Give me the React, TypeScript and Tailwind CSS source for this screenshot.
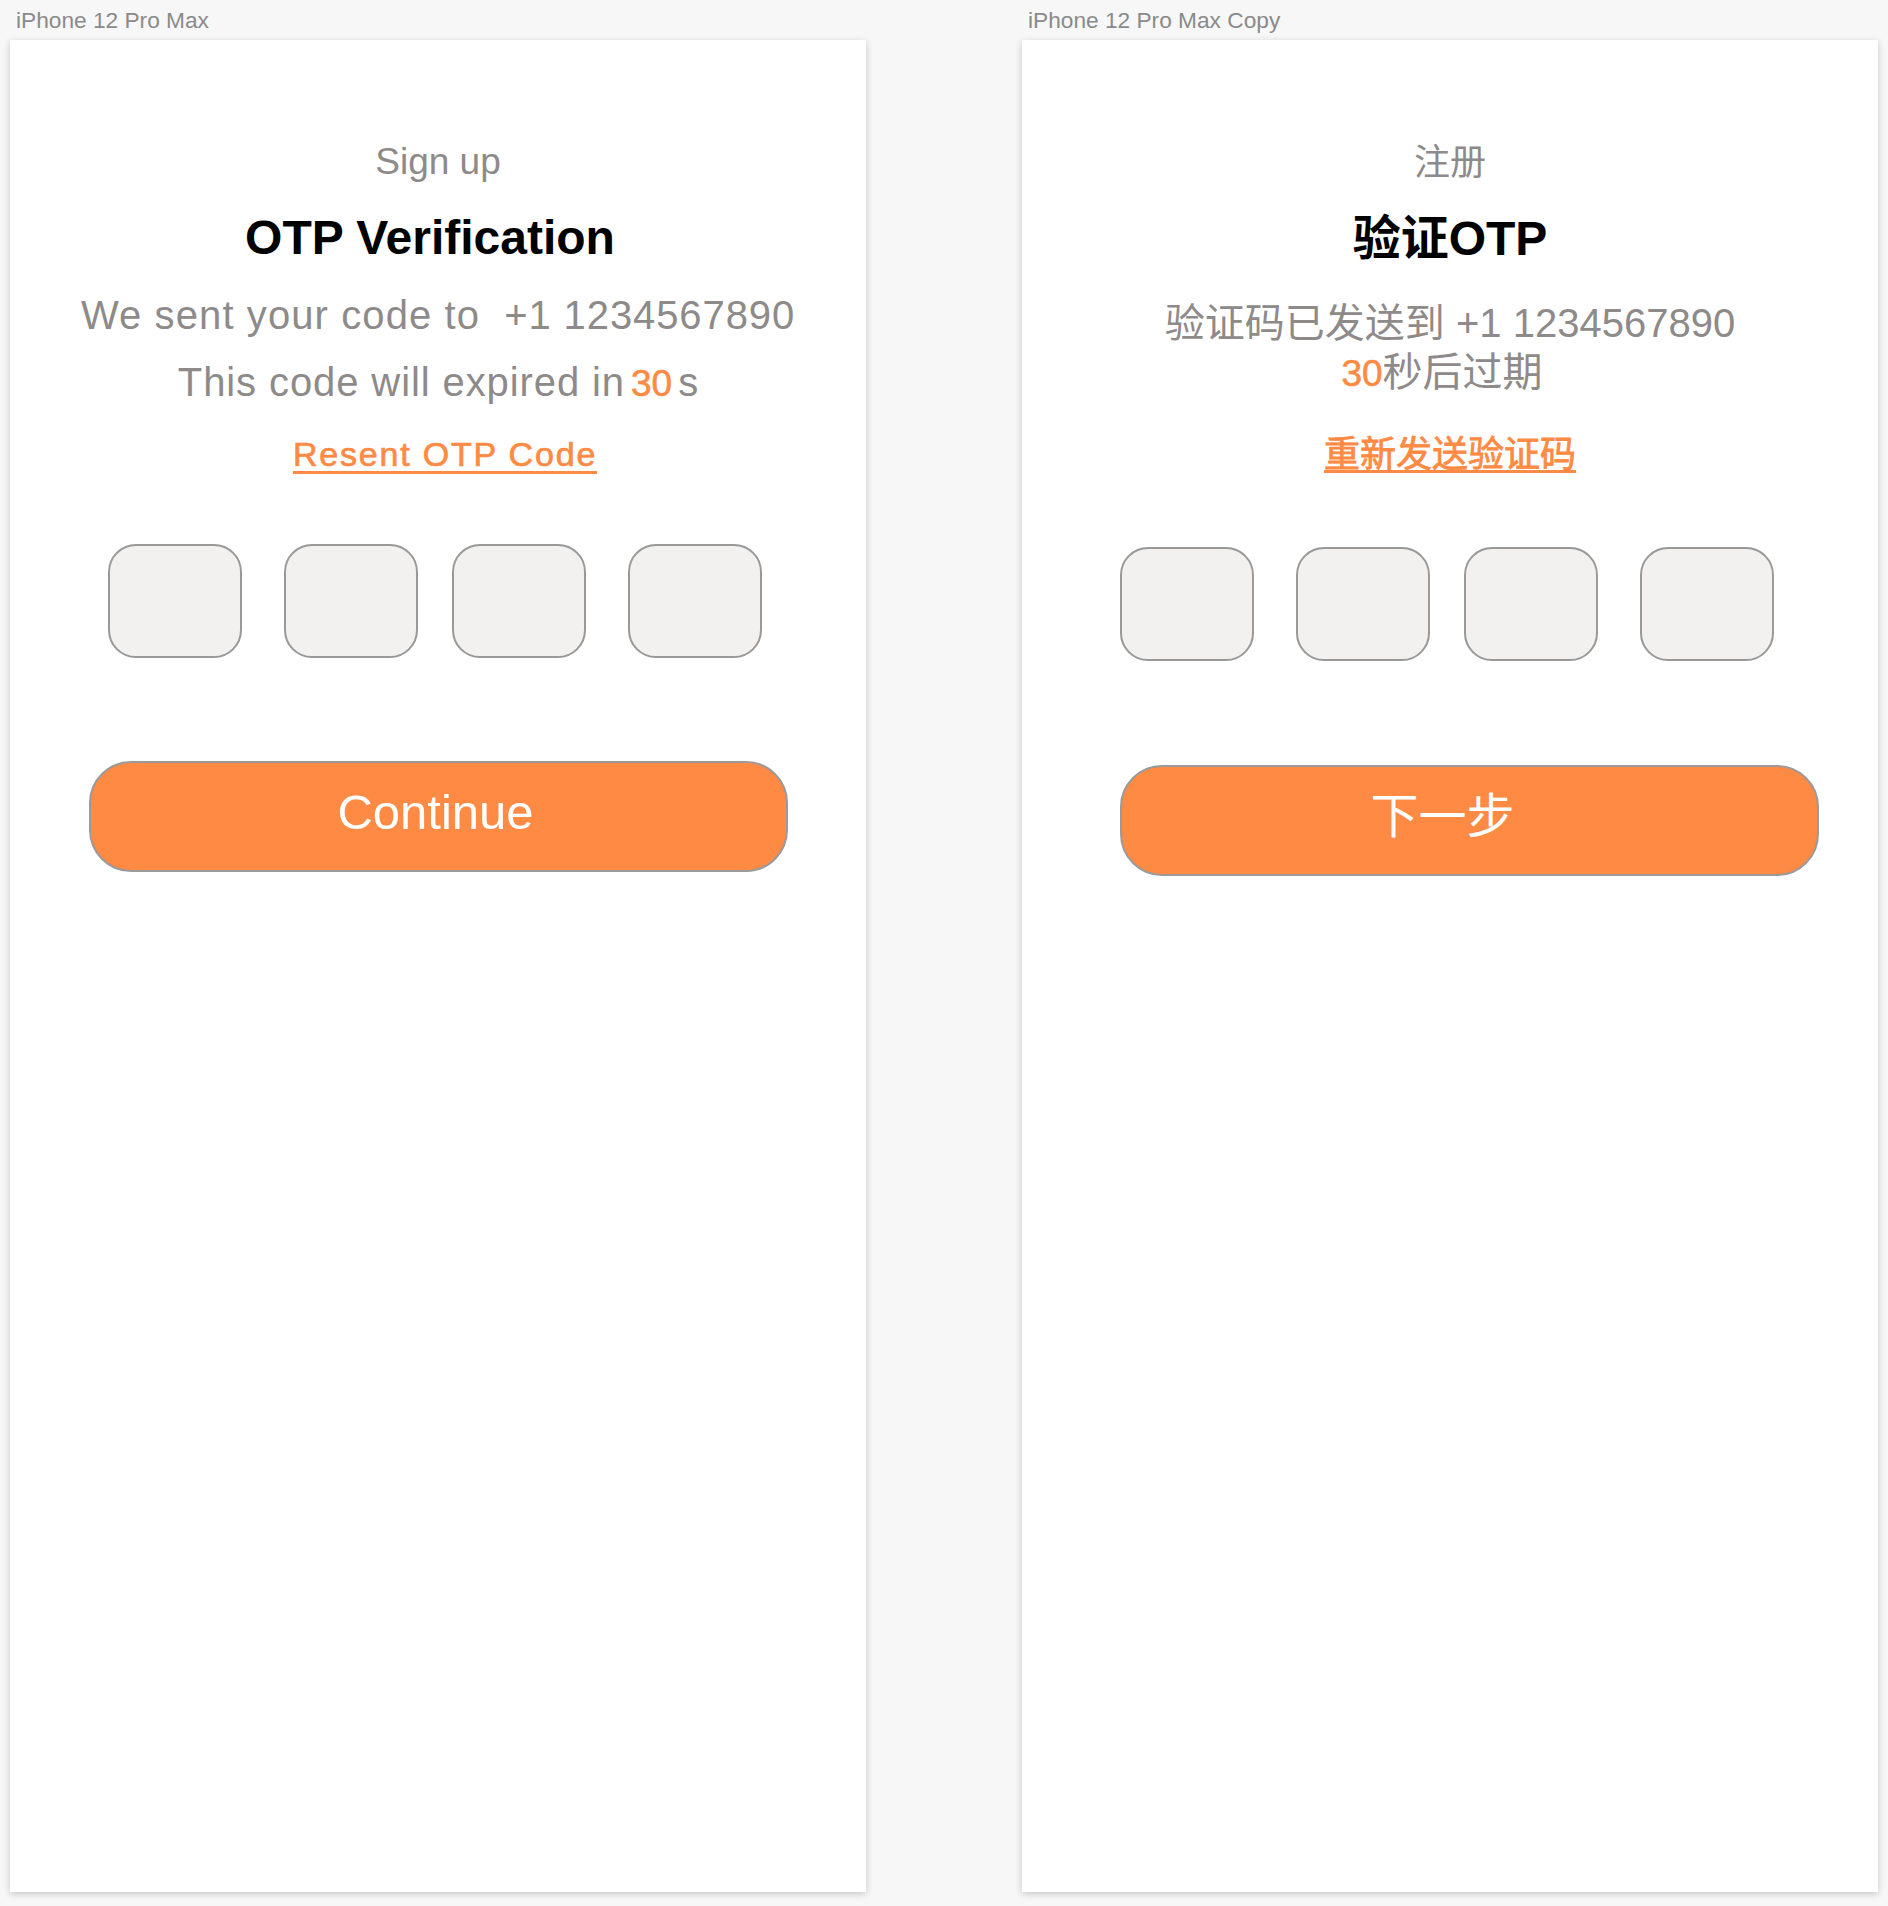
import type { ReactNode } from "react"

function Artboard({ label, children }: { label: string; children: ReactNode }) {
  return (
    <div className="flex flex-col">
      <div className="h-[40px] pl-[6px] pt-[9px] text-[22.7px] leading-[22px] text-[#8a8a8a]">{label}</div>
      <div className="flex h-[1852px] w-[856px] flex-col items-center bg-white shadow-[0_2px_7px_rgba(0,0,0,0.2)]">
        {children}
      </div>
    </div>
  )
}

function CodeBoxes({ className }: { className: string }) {
  const box = "h-[114px] w-[134px] rounded-[28px] border-2 border-[#999999] bg-[#f2f1f0]"
  return (
    <div className={`flex self-start pl-[98px] ${className}`}>
      <div className={box} />
      <div className={`${box} ml-[42px]`} />
      <div className={`${box} ml-[34px]`} />
      <div className={`${box} ml-[42px]`} />
    </div>
  )
}

export default function App() {
  return (
    <div className="flex min-h-[1906px] w-[1888px] gap-[156px] bg-[#f7f7f7] pl-[10px] font-['Liberation_Sans','Noto_Sans_CJK_SC',sans-serif]">
      <Artboard label="iPhone 12 Pro Max">
        <div className="mt-[98px] text-[37px] leading-[48px] text-[#8e8a8a]">Sign up</div>
        <h1 className="mt-[22px] mr-[16px] text-[48px] font-bold leading-[60px] text-black">OTP Verification</h1>
        <p className="mt-[19px] whitespace-pre text-[40px] leading-[56px] tracking-[0.9px] text-[#8e8a8a]">
          <span className="tracking-[1.1px]">We sent your code to</span>
          {"  +1 1234567890"}
        </p>
        <p className="mt-[11px] text-[40px] leading-[56px] text-[#8e8a8a]">
          <span className="tracking-[0.9px]">This code will expired in</span>
          <span className="ml-[6px] text-[37px] text-[#ff8a44] [-webkit-text-stroke:0.6px_#ff8a44]">30</span>
          <span className="ml-[6px]">s</span>
        </p>
        <a
          href="#"
          className="mt-[18px] ml-[14px] text-[34px] leading-[48px] tracking-[1.8px] text-[#ff8a44] underline decoration-[3px] underline-offset-[5px] [-webkit-text-stroke:0.7px_#ff8a44]"
        >
          Resent OTP Code
        </a>
        <CodeBoxes className="mt-[66px]" />
        <button
          type="button"
          className="mt-[103px] ml-[79px] flex h-[111px] w-[699px] items-center justify-center self-start rounded-[42px] border-2 border-[#9a9a9a] bg-[#ff8a44] pb-[10px] pr-[6px] text-[49px] leading-[56px] text-white"
        >
          Continue
        </button>
      </Artboard>

      <Artboard label="iPhone 12 Pro Max Copy">
        <div className="mt-[99px] text-[36px] leading-[48px] text-[#8e8a8a]">注册</div>
        <h1 className="mt-[22px] text-[48px] font-bold leading-[60px] text-black">验证OTP</h1>
        <p className="mt-[34px] text-[40px] leading-[40px] text-[#8e8a8a]">验证码已发送到 +1 1234567890</p>
        <p className="mt-[9px] mr-[16px] text-[40px] leading-[40px] text-[#8e8a8a]">
          <span className="text-[37px] text-[#ff8a44] [-webkit-text-stroke:0.6px_#ff8a44]">30</span>秒后过期
        </p>
        <a
          href="#"
          className="mt-[37px] text-[36px] leading-[48px] text-[#ff8a44] underline decoration-[3px] underline-offset-[3px] [-webkit-text-stroke:0.8px_#ff8a44]"
        >
          重新发送验证码
        </a>
        <CodeBoxes className="mt-[68px]" />
        <button
          type="button"
          className="mt-[104px] ml-[98px] flex h-[111px] w-[699px] items-center justify-center self-start rounded-[42px] border-2 border-[#9a9a9a] bg-[#ff8a44] pb-[8px] pr-[54px] text-[48px] leading-[56px] text-white"
        >
          下一步
        </button>
      </Artboard>
    </div>
  )
}
